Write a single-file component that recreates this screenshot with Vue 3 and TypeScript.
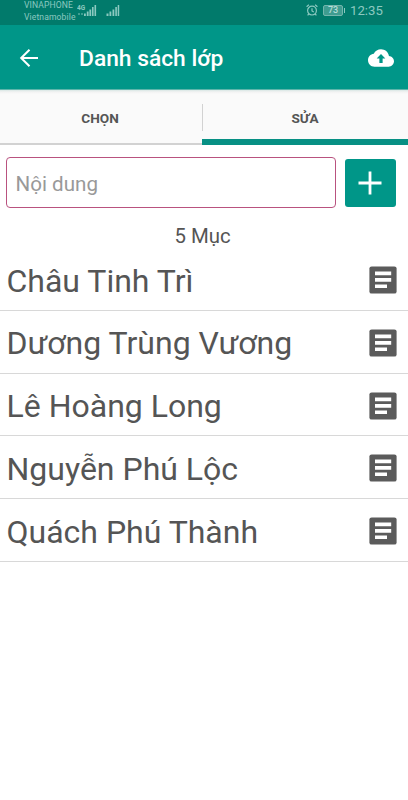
<script setup lang="ts">
import { ref } from 'vue'

const tabs: string[] = ['CHỌN', 'SỬA']
const activeTab = ref<number>(1)
const content = ref<string>('')
const names = ref<string[]>([
  'Châu Tinh Trì',
  'Dương Trùng Vương',
  'Lê Hoàng Long',
  'Nguyễn Phú Lộc',
  'Quách Phú Thành',
])

function addName(): void {
  const value = content.value.trim()
  if (value) names.value.push(value)
  content.value = ''
}
</script>

<template>
  <div class="screen">
    <div class="status">
      <div class="carriers">
        <span>VINAPHONE</span>
        <span>Vietnamobile</span>
      </div>
      <svg class="signals" width="44" height="16" viewBox="0 0 44 16" fill="currentColor">
        <text x="0" y="8.5" font-size="6.5" font-weight="700">4G</text>
        <path opacity=".45" d="M1 12h2v2H1zM4 12h2v2H4z" />
        <path d="M7 12.5h1.8V15H7zM9.8 10.5h1.8V15H9.8zM12.4 8.5h1.8V15h-1.8zM15 6h1.6v9H15zM17.5 4h1.6v11h-1.6z" />
        <path d="M29.5 12.5h2V15h-2zM32.5 10.5h1.8V15h-1.8zM35.5 8.5h1.8V15h-1.8zM38.3 6h1.6v9h-1.6zM40.7 4h1.5v11h-1.5z" />
      </svg>
      <svg class="alarm" width="12" height="12" viewBox="0 0 12 12" fill="none" stroke="currentColor" stroke-width="1.2">
        <circle cx="6" cy="6.6" r="4.4" />
        <path d="M6 4.2v2.8l1.8 1M.6 2.7 2.9.8M11.4 2.7 9.1.8M2.8 10l-1.2 1.3M9.2 10l1.2 1.3" />
      </svg>
      <div class="battery">73</div>
      <div class="clock">12:35</div>
    </div>

    <header class="bar">
      <svg class="back" width="20" height="20" viewBox="0 0 20 20" fill="none" stroke="#fff" stroke-width="2">
        <path d="M19 10H3M10.5 1.7 2.2 10l8.3 8.3" />
      </svg>
      <h1>Danh sách lớp</h1>
      <svg class="cloud" width="26" height="26" viewBox="0 0 24 24" fill="#fff">
        <path d="M19.35 10.04C18.67 6.59 15.64 4 12 4 9.11 4 6.6 5.64 5.35 8.04 2.34 8.36 0 10.91 0 14c0 3.31 2.69 6 6 6h13c2.76 0 5-2.24 5-5 0-2.64-2.05-4.78-4.65-4.96zM13.5 12.5V16.5h-3v-4H8l4-4.2 4 4.2h-2.5z" />
      </svg>
    </header>

    <nav class="tabs">
      <button
        v-for="(tab, i) in tabs"
        :key="tab"
        class="tab"
        :class="{ active: activeTab === i }"
        @click="activeTab = i"
      >{{ tab }}</button>
    </nav>

    <form class="entry" @submit.prevent="addName">
      <input v-model="content" type="text" placeholder="Nội dung" />
      <button class="add" type="submit">
        <svg width="24" height="24" viewBox="0 0 24 24" fill="none" stroke="#fff" stroke-width="2.8">
          <path d="M12 .5v23M.5 12h23" />
        </svg>
      </button>
    </form>

    <div class="count">{{ names.length }} Mục</div>

    <ul class="list">
      <li v-for="name in names" :key="name">
        <span>{{ name }}</span>
        <svg width="28" height="28" viewBox="0 0 28 28">
          <rect x=".4" y=".4" width="27.2" height="27.2" rx="2.2" fill="#5b5b5b" />
          <path d="M6 5.5h16.2v3.8H6zM6 12h16.2v3.8H6zM6 18.4h12V22H6z" fill="#fff" />
        </svg>
      </li>
    </ul>
  </div>
</template>

<style>
body {
  background: #fff;
}
</style>

<style scoped>
.screen {
  box-sizing: border-box;
  height: 800px;
  overflow: hidden;
  background: #fff;
  color: #555;
  font-family: Roboto, "Liberation Sans", sans-serif;
}
.status {
  display: flex;
  height: 25px;
  padding-left: 24px;
  background: #017a6b;
  color: #8cc9c0;
}
.carriers {
  display: flex;
  flex-direction: column;
  width: 52px;
  margin-top: -1px;
  font-size: 8.6px;
  line-height: 12px;
  letter-spacing: 0.1px;
  white-space: nowrap;
}
.signals {
  margin: 1px 0 0 1px;
}
.alarm {
  margin: 4px 0 0 185px;
}
.battery {
  position: relative;
  box-sizing: border-box;
  width: 20px;
  height: 11px;
  margin: 5px 0 0 5px;
  border: 1px solid #73b6ad;
  border-radius: 2px;
  background: #3f9c90;
  color: #b7ded9;
  font-size: 9px;
  font-weight: 500;
  line-height: 9px;
  text-align: center;
}
.battery::after {
  content: "";
  position: absolute;
  top: 2px;
  right: -3px;
  width: 1px;
  height: 5px;
  background: #8cc9c0;
}
.clock {
  margin: 3px 0 0 7px;
  font-size: 13.2px;
  line-height: 16px;
}
.bar {
  display: flex;
  align-items: center;
  box-sizing: border-box;
  height: 65px;
  padding: 0 14px 0 19px;
  background: #009688;
  border-bottom: 1px solid #5db5ab;
}
h1 {
  flex: 1;
  margin: 3px 0 0 40px;
  color: #fff;
  font-size: 22.8px;
  font-weight: 500;
  line-height: 28px;
}
.back {
  margin-top: 1px;
}
.cloud {
  margin-top: 1px;
}
.tabs {
  position: relative;
  display: flex;
  height: 55px;
  background: linear-gradient(#d9e7e5, #f3f3f3 2px, #fafafa 4px);
}
.tabs::after {
  content: "";
  position: absolute;
  left: 202px;
  top: 14px;
  width: 1px;
  height: 27px;
  background: #d2d2d2;
}
.tab {
  box-sizing: border-box;
  width: 206px;
  padding: 2px 0 0;
  border: 0;
  border-bottom: 2px solid #d2d2d2;
  background: none;
  color: #555;
  font: 700 13.6px/16px Roboto, sans-serif;
}
.tab:first-child {
  width: 202px;
  padding-right: 2px;
}
.tab.active {
  padding-top: 6px;
  border-bottom: 6px solid #079084;
}
.entry {
  display: flex;
  height: 52px;
  margin: 12px 12px 0 6px;
}
input {
  box-sizing: border-box;
  width: 330px;
  height: 51px;
  padding: 2px 8.5px 0;
  border: 1px solid #b9527f;
  border-radius: 4px;
  outline: 0;
  background: #fff;
  color: #555;
  font: 400 20.6px Roboto, sans-serif;
}
input::placeholder {
  color: #999;
  opacity: 1;
}
.add {
  display: grid;
  place-items: center;
  width: 51px;
  height: 48px;
  margin: 2px 0 0 9px;
  padding: 0 1px 1px 0;
  border: 0;
  border-radius: 3px;
  background: #009688;
}
.count {
  height: 39px;
  margin-right: 3px;
  font-size: 20.4px;
  line-height: 54px;
  text-align: center;
}
.list {
  margin: 0;
  padding: 0;
  list-style: none;
}
li {
  display: flex;
  align-items: center;
  justify-content: space-between;
  box-sizing: border-box;
  height: 62.75px;
  padding: 2.5px 11px 0 6.5px;
  border-bottom: 1px solid #d8d8d8;
  font-size: 32px;
  line-height: 40px;
  white-space: nowrap;
}
li span {
  padding-top: 1px;
}
</style>
